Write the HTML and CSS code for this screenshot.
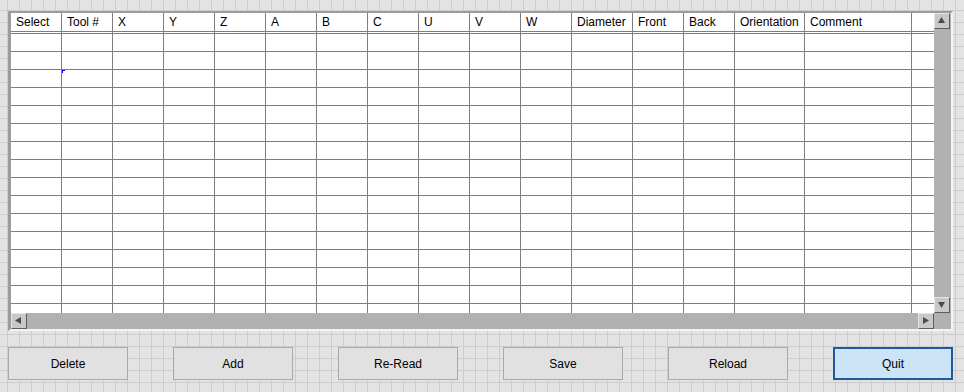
FILE: index.html
```html
<!DOCTYPE html>
<html lang="en">
<head>
    <meta charset="UTF-8">
    <title>Tool Table</title>
    <link rel="stylesheet" href="styles.css">
</head>
<body>
    <div class="panel">
        <div class="viewport">
            <table class="tools">
                <thead>
                    <tr>
                        <th class="w51">Select</th><th class="w51">Tool #</th><th class="w51">X</th><th class="w51">Y</th>
                        <th class="w51">Z</th><th class="w51">A</th><th class="w51">B</th><th class="w51">C</th>
                        <th class="w51">U</th><th class="w51">V</th><th class="w51">W</th><th class="w61">Diameter</th>
                        <th class="w51">Front</th><th class="w51">Back</th><th class="w70">Orientation</th><th class="w107">Comment</th>
                        <th class="w22 last"></th>
                    </tr>
                </thead>
                <tbody>
                    <tr><td></td><td></td><td></td><td></td><td></td><td></td><td></td><td></td><td></td><td></td><td></td><td></td><td></td><td></td><td></td><td></td><td class="last"></td></tr>
                    <tr><td></td><td></td><td></td><td></td><td></td><td></td><td></td><td></td><td></td><td></td><td></td><td></td><td></td><td></td><td></td><td></td><td class="last"></td></tr>
                    <tr><td></td><td class="marked"><span class="cursor"></span></td><td></td><td></td><td></td><td></td><td></td><td></td><td></td><td></td><td></td><td></td><td></td><td></td><td></td><td></td><td class="last"></td></tr>
                    <tr><td></td><td></td><td></td><td></td><td></td><td></td><td></td><td></td><td></td><td></td><td></td><td></td><td></td><td></td><td></td><td></td><td class="last"></td></tr>
                    <tr><td></td><td></td><td></td><td></td><td></td><td></td><td></td><td></td><td></td><td></td><td></td><td></td><td></td><td></td><td></td><td></td><td class="last"></td></tr>
                    <tr><td></td><td></td><td></td><td></td><td></td><td></td><td></td><td></td><td></td><td></td><td></td><td></td><td></td><td></td><td></td><td></td><td class="last"></td></tr>
                    <tr><td></td><td></td><td></td><td></td><td></td><td></td><td></td><td></td><td></td><td></td><td></td><td></td><td></td><td></td><td></td><td></td><td class="last"></td></tr>
                    <tr><td></td><td></td><td></td><td></td><td></td><td></td><td></td><td></td><td></td><td></td><td></td><td></td><td></td><td></td><td></td><td></td><td class="last"></td></tr>
                    <tr><td></td><td></td><td></td><td></td><td></td><td></td><td></td><td></td><td></td><td></td><td></td><td></td><td></td><td></td><td></td><td></td><td class="last"></td></tr>
                    <tr><td></td><td></td><td></td><td></td><td></td><td></td><td></td><td></td><td></td><td></td><td></td><td></td><td></td><td></td><td></td><td></td><td class="last"></td></tr>
                    <tr><td></td><td></td><td></td><td></td><td></td><td></td><td></td><td></td><td></td><td></td><td></td><td></td><td></td><td></td><td></td><td></td><td class="last"></td></tr>
                    <tr><td></td><td></td><td></td><td></td><td></td><td></td><td></td><td></td><td></td><td></td><td></td><td></td><td></td><td></td><td></td><td></td><td class="last"></td></tr>
                    <tr><td></td><td></td><td></td><td></td><td></td><td></td><td></td><td></td><td></td><td></td><td></td><td></td><td></td><td></td><td></td><td></td><td class="last"></td></tr>
                    <tr><td></td><td></td><td></td><td></td><td></td><td></td><td></td><td></td><td></td><td></td><td></td><td></td><td></td><td></td><td></td><td></td><td class="last"></td></tr>
                    <tr><td></td><td></td><td></td><td></td><td></td><td></td><td></td><td></td><td></td><td></td><td></td><td></td><td></td><td></td><td></td><td></td><td class="last"></td></tr>
                    <tr><td></td><td></td><td></td><td></td><td></td><td></td><td></td><td></td><td></td><td></td><td></td><td></td><td></td><td></td><td></td><td></td><td class="last"></td></tr>
                    <tr><td></td><td></td><td></td><td></td><td></td><td></td><td></td><td></td><td></td><td></td><td></td><td></td><td></td><td></td><td></td><td></td><td class="last"></td></tr>
                </tbody>
            </table>
        </div>
        <div class="vscroll">
            <span class="arrow"><svg width="16" height="16" viewBox="0 0 16 16"><polygon points="7.5,4 11,10 4,10" fill="#4a4a4a"/></svg></span>
            <span class="arrow"><svg width="16" height="16" viewBox="0 0 16 16"><polygon points="4,5 11,5 7.5,11" fill="#4a4a4a"/></svg></span>
        </div>
        <div class="hscroll">
            <span class="arrow"><svg width="16" height="16" viewBox="0 0 16 16"><polygon points="4,7.5 10,4 10,11" fill="#4a4a4a"/></svg></span>
            <span class="arrow"><svg width="16" height="16" viewBox="0 0 16 16"><polygon points="5,4 11,7.5 5,11" fill="#4a4a4a"/></svg></span>
        </div>
        <div class="corner"></div>
    </div>

    <div class="buttons">
        <button class="btn">Delete</button>
        <button class="btn">Add</button>
        <button class="btn">Re-Read</button>
        <button class="btn">Save</button>
        <button class="btn">Reload</button>
        <button class="btn primary">Quit</button>
    </div>
</body>
</html>
```

FILE: styles.css
```css
html, body {
    margin: 0;
    height: 100%;
}
body {
    overflow: hidden;
    background-color: #e3e3e3;
    background-image:
        linear-gradient(to right, #cdcdcd 1px, transparent 1px),
        linear-gradient(to bottom, #cdcdcd 1px, transparent 1px);
    background-size: 12px 12px;
    background-position: 7px 10px;
    font-family: "Liberation Sans", Arial, sans-serif;
    font-size: 12px;
    color: #000;
}

/* table control with sunken frame */
.panel {
    margin: 11px 0 0 8px;
    width: 945px;
    height: 320px;
    box-sizing: border-box;
    border-style: solid;
    border-width: 2px 2px 2px 3px;
    border-color: #9c9c9c #f3f3f3 #f3f3f3 #9c9c9c;
    display: grid;
    grid-template-columns: 923px 17px;
    grid-template-rows: 300px 16px;
    background: #b1b1b1;
}
.viewport {
    overflow: hidden;
    background: #fff;
}
.tools {
    border-collapse: separate;
    border-spacing: 0;
    table-layout: fixed;
    width: 923px;
}
.tools th, .tools td {
    box-sizing: border-box;
    border-right: 1px solid #7e7e7e;
    padding: 0 0 0 5px;
    height: 18px;
    border-bottom: 1px solid #7e7e7e;
}
.tools th {
    height: 21px;
    border-bottom: 3px double #7e7e7e;
    font-weight: normal;
    text-align: left;
    line-height: 17px;
    white-space: nowrap;
    overflow: hidden;
}
.tools .last { border-right: none; }
.w51 { width: 51px; }
.w61 { width: 61px; }
.w70 { width: 70px; }
.w107 { width: 107px; }
.w22 { width: 22px; }

.marked { position: relative; }
.cursor {
    position: absolute;
    left: 0;
    top: 0;
    width: 2px;
    height: 2px;
    border-top: 1px solid #0000ff;
    border-left: 1px solid #0000ff;
}

.vscroll {
    display: flex;
    flex-direction: column;
    justify-content: space-between;
    background: #b1b1b1;
}
.hscroll {
    display: flex;
    justify-content: space-between;
    background: #b1b1b1;
}
.corner { background: #b1b1b1; }
.arrow {
    display: block;
    width: 16px;
    height: 16px;
    box-sizing: border-box;
    background: #c8c8c8;
    border-style: solid;
    border-width: 1px;
    border-color: #e6e6e6 #5e5e5e #5e5e5e #e6e6e6;
}
.arrow svg {
    display: block;
    margin: -1px 0 0 -1px;
}

/* button row */
.buttons {
    display: flex;
    gap: 45px;
    margin-top: 16px;
    padding-left: 8px;
}
.btn {
    width: 120px;
    height: 33px;
    box-sizing: border-box;
    border: 1px solid #a9a9a9;
    background: #e1e1e1;
    font-family: "Liberation Sans", Arial, sans-serif;
    font-size: 12px;
    color: #000;
    padding: 0;
}
.btn.primary {
    background: #cce4f7;
    border: 1px solid #1f5b9b;
    box-shadow: inset 0 0 0 1px #1f5b9b;
}
```
